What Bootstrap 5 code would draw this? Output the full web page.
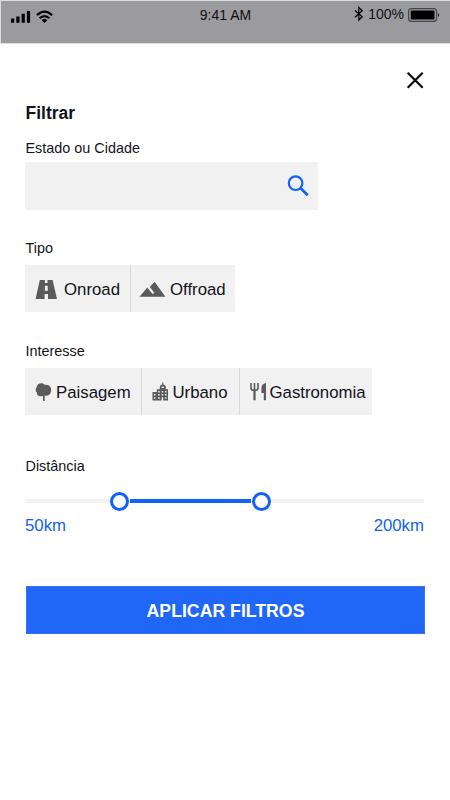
<!DOCTYPE html>
<html lang="pt-BR">
<head>
<meta charset="utf-8">
<meta name="viewport" content="width=device-width, initial-scale=1">
<title>Filtrar</title>
<link href="https://cdn.jsdelivr.net/npm/bootstrap@5.3.0/dist/css/bootstrap.min.css" rel="stylesheet">
<style>
body{font-family:"Liberation Sans",Arial,sans-serif;color:#11131a;height:800px;overflow:hidden;background:#fff}
svg{display:block;flex:none}
.status{height:44px;padding:5px 10px 0 10px;background:#9b9a9f;border:solid #dcdedc;border-width:1px 0 1px 1px;font-size:14px;line-height:20px;color:#111}
.status>div{flex:1 1 0}
.status .clock{line-height:18px}
.status .charge{line-height:17px}
.closer{width:20px;height:20px;padding:0;margin:26px 25px 0 auto;display:block;border:0;background:none}
.sheet{padding:0 25px}
.heading{font-size:17.5px;line-height:22px;margin:12px 0 0 .5px;font-weight:700}
.caption-row{font-size:14.4px;line-height:20px;padding-left:.5px;display:block}
.place-label{margin-top:14px}
.search-box{width:293px;height:48px;background:#f1f1f1;margin-top:4px}
.search-box .form-control{box-shadow:none;font-size:16.8px}
.chips{height:47px;margin-top:7px}
.chips .btn{background:#f1f1f1;border:0;border-radius:0;padding:0;font-size:16.8px;color:#11131a;line-height:20px}
.chips .btn+.btn{border-left:1.5px solid #d9d9d9}
.chips span{padding-top:3px}
.gap-a{margin-top:28px}.gap-b{margin-top:29px}.gap-c{margin-top:41px}
.slider{height:20px;margin-top:15px;width:399px}
.rail{height:4px;background:#f2f2f2}
.rail.on{background:#1262fa;margin:0 1px}
.knob{width:19px;height:19px;border:3.5px solid #1262fa;border-radius:50%;background:#fff}
.range-text{font-size:16.8px;line-height:20px;color:#1262e8;margin-top:5px;width:399px}
.apply{width:399px;height:48px;margin:50px 0 0 1px;background:#2167f7;border:1px solid #3a70f0;border-radius:0;font-size:17.7px;font-weight:700;color:#fff;padding:3px 0 0}
</style>
<script src="https://cdn.jsdelivr.net/npm/bootstrap@5.3.0/dist/js/bootstrap.bundle.min.js"></script>
</head>
<body>
<header class="status d-flex align-items-start">
  <div class="d-flex pt-1 gap-1">
    <svg width="21" height="14" viewBox="0 0 21 14"><path d="M0 8.500h3.200v4.300H0zM5.300 6.500h3.200v6.300H5.300zM10.600 3.800h3.200v9h-3.200zM15.900 1h3.200v11.800h-3.200z"/></svg>
    <svg width="17" height="14" viewBox="0 0 17 14"><g fill="none" stroke="#000" stroke-width="2.200"><path d="M.9 5.100Q8.500-1.800 16.100 5.100M3.600 8.300q4.900-4.400 9.800 0"/></g><path d="M5.600 10.100q2.900-2.300 5.800 0l-2.900 2.800z"/></svg>
  </div>
  <span class="clock">9:41 AM</span>
  <div class="d-flex justify-content-end">
    <svg width="10" height="16" viewBox="0 0 10 16"><path d="M1 4.500l7.200 6.200L4.800 14V1.500l3.400 3.200L1 11.200" fill="none" stroke="#000" stroke-width="1.200"/></svg>
    <span class="charge ms-1">100%</span>
    <svg class="ms-1" width="32" height="17" viewBox="0 0 32 17"><rect x=".6" y="2.600" width="28" height="12.800" rx="3" fill="none" stroke="#454548" stroke-width="1.100"/><rect x="2.700" y="4.600" width="23.800" height="8.800" rx="1"/><path d="M30 7q2 2 0 4z"/></svg>
  </div>
</header>
<main>
  <button class="closer" aria-label="Fechar"><svg width="20" height="20" viewBox="0 0 20 20"><path d="M2.700 2.700l15 15M17.700 2.700l-15 15" stroke="#080b12" stroke-width="2.200"/></svg></button>
  <form class="sheet">
    <h1 class="heading">Filtrar</h1>
    <label class="caption-row place-label" for="place">Estado ou Cidade</label>
    <div class="search-box d-flex align-items-center">
      <input id="place" class="form-control border-0 bg-transparent flex-fill">
      <svg class="me-2" width="24" height="24" viewBox="0 0 24 24" fill="none" stroke="#1262fa"><circle cx="9.600" cy="9.200" r="6.800" stroke-width="2.200"/><path d="M14.400 14l7.300 7.300" stroke-width="2.800"/></svg>
    </div>

    <div class="caption-row gap-a">Tipo</div>
    <div class="chips d-flex">
      <button type="button" class="btn d-flex align-items-center" style="width:105px">
        <svg width="39" height="22" viewBox="0 0 39 22"><path fill="#5b5b5b" d="M14.800 2h5.100v3h2.600V2h5.100L32 21h-9v-5h-3.400v5h-9zM20 7.700l-.2 5.100h3.100l-.3-5.100z" fill-rule="evenodd"/></svg><span>Onroad</span></button>
      <button type="button" class="btn d-flex align-items-center" style="width:105px">
        <svg width="39" height="22" viewBox="0 0 39 22"><path fill="#5b5b5b" d="M8.500 18.800l7.800-9.400 5.200 6.500 1.800-1.200-4.500-5.600 4.800-5.300 10.800 15z"/></svg><span class="ps-0">Offroad</span></button>
    </div>

    <div class="caption-row gap-b">Interesse</div>
    <div class="chips d-flex">
      <button type="button" class="btn d-flex align-items-center" style="width:115.5px">
        <svg width="31" height="22" viewBox="0 0 31 22"><path fill="#5b5b5b" d="M11.800 6C11.800 1.800 18 1 20 4c4-1 7.200 3 6 6.500-.4 3.400-3.500 4.900-6.300 4v5.400h-1.700v-5C15 16 11.800 15 12 12 10.200 10.400 10.300 7.300 11.800 6z"/></svg><span>Paisagem</span></button>
      <button type="button" class="btn d-flex align-items-center" style="width:98px">
        <svg width="31" height="22" viewBox="0 0 31 22"><path fill="#5b5b5b" fill-rule="evenodd" d="M10.500 11h4.300V8.200h3V5.500q.2-1.700 2.400-2V1.500h1.200v2q2.200.3 2.400 2v2.700h2.200v11.300H10.500zM12 13v1.500h1.500V13zm0 3.200v1.500h1.500v-1.500zM16.200 10v1.600h1.500V10zm3.500 0v1.600h1.500V10zm3.400 0v1.600h1.500V10zM16.200 13v1.600h1.500V13zm3.500 0v1.600h1.500V13zm3.400 0v1.600h1.500V13zM16.200 16.200v1.600h1.500v-1.600zm3.500 0v3.300h1.500v-3.300zm3.400 0v1.600h1.500v-1.600zM19.600 5.600v1.400h2.200V5.600z"/></svg><span>Urbano</span></button>
      <button type="button" class="btn d-flex align-items-center" style="width:133.5px">
        <svg width="30" height="22" viewBox="0 0 30 22"><path fill="none" stroke="#5b5b5b" stroke-width="1.600" d="M11 2v5q0 2.400 3.500 2.400T18 7V2M14.500 2v8"/><path d="M14.500 9v10.300" stroke="#5b5b5b" stroke-width="2.200"/><path fill="#5b5b5b" d="M26 2v17.300h-2.200V12h-2.400V7q0-4 4.600-5z"/></svg><span>Gastronomia</span></button>
    </div>

    <div class="caption-row gap-c">Distância</div>
    <div class="slider d-flex align-items-center">
      <div class="rail" style="width:85px"></div><div class="knob"></div>
      <div class="rail on flex-fill"></div>
      <div class="knob"></div><div class="rail" style="width:153px"></div>
    </div>
    <div class="range-text d-flex justify-content-between"><span>50km</span><span>200km</span></div>
    <button type="button" class="apply btn d-flex align-items-center justify-content-center">APLICAR FILTROS</button>
  </form>
</main>
</body>
</html>
